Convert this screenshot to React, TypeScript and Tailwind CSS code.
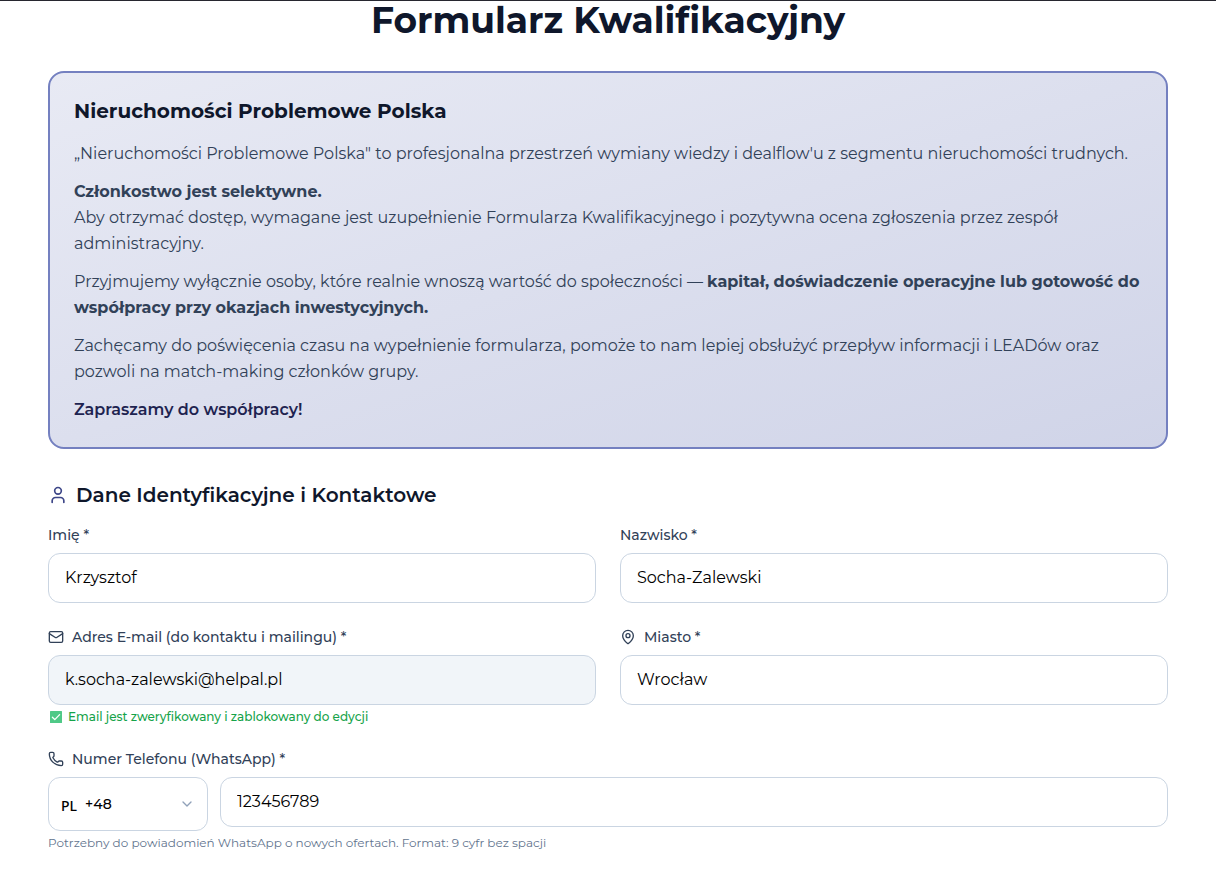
import { useState } from "react";
import type { ReactNode } from "react";
import { ChevronDown, Mail, MapPin, Phone, User } from "lucide-react";

const inputClass =
	"w-full h-[50px] rounded-xl border border-slate-300 px-4 pb-0.5 text-base leading-6 text-black outline-none focus:border-indigo-400";

type FieldProps = {
	id: string;
	label: string;
	icon?: ReactNode;
	children: ReactNode;
};

function Field({ id, label, icon, children }: FieldProps) {
	return (
		<div>
			<label htmlFor={id} className="mb-2 flex items-center gap-2 text-sm leading-5 font-medium text-slate-700">
				{icon}
				{label}
			</label>
			{children}
		</div>
	);
}

function VerifiedMark() {
	return (
		<svg viewBox="0 0 12 12" className="size-3 shrink-0" aria-hidden="true">
			<rect width="12" height="12" rx="0.5" fill="#4fc987" />
			<path d="M2.4 6.2 4.8 8.6 9.6 3.6" fill="none" stroke="#fff" strokeWidth="1.3" strokeLinecap="round" strokeLinejoin="round" />
		</svg>
	);
}

export default function App() {
	const [form, setForm] = useState({
		firstName: "Krzysztof",
		lastName: "Socha-Zalewski",
		city: "Wrocław",
		prefix: "+48",
		phone: "123456789",
	});

	const update = (key: keyof typeof form, value: string) => setForm({ ...form, [key]: value });

	return (
		<main className="border-t border-[#27272f] bg-white px-12 pb-5 font-['Montserrat','Inter',sans-serif]">
			<h1 className="text-center text-4xl leading-[38px] font-bold text-slate-900">Formularz Kwalifikacyjny</h1>

			{/* Intro */}
			<section className="mt-8 rounded-2xl border-2 border-[#7480c0] bg-linear-to-br from-[#e8eaf4] to-[#d0d4e8] p-6">
				<h2 className="mb-4 text-xl leading-7 font-bold text-slate-900">Nieruchomości Problemowe Polska</h2>
				<div className="space-y-3 text-base leading-[26px] text-slate-700">
					<p>
						„Nieruchomości Problemowe Polska" to profesjonalna przestrzeń wymiany wiedzy i dealflow'u z segmentu nieruchomości trudnych.
					</p>
					<p>
						<strong>Członkostwo jest selektywne.</strong>
						<br />
						Aby otrzymać dostęp, wymagane jest uzupełnienie Formularza Kwalifikacyjnego i pozytywna ocena zgłoszenia przez zespół administracyjny.
					</p>
					<p>
						Przyjmujemy wyłącznie osoby, które realnie wnoszą wartość do społeczności —{" "}
						<strong>kapitał, doświadczenie operacyjne lub gotowość do współpracy przy okazjach inwestycyjnych.</strong>
					</p>
					<p>
						Zachęcamy do poświęcenia czasu na wypełnienie formularza, pomoże to nam lepiej obsłużyć przepływ informacji i LEADów oraz pozwoli na match-making członków grupy.
					</p>
					<p className="font-semibold text-[#1e2350]">Zapraszamy do współpracy!</p>
				</div>
			</section>

			{/* Contact data */}
			<form className="mt-8" onSubmit={(e) => e.preventDefault()}>
				<h2 className="mb-4 flex items-center gap-2 text-xl leading-7 font-semibold text-slate-900">
					<User className="size-5 text-[#3d4688]" />
					Dane Identyfikacyjne i Kontaktowe
				</h2>

				<div className="grid grid-cols-2 gap-6">
					<Field id="firstName" label="Imię *">
						<input id="firstName" className={inputClass} value={form.firstName} onChange={(e) => update("firstName", e.target.value)} />
					</Field>
					<Field id="lastName" label="Nazwisko *">
						<input id="lastName" className={inputClass} value={form.lastName} onChange={(e) => update("lastName", e.target.value)} />
					</Field>
					<Field id="email" label="Adres E-mail (do kontaktu i mailingu) *" icon={<Mail className="size-4" />}>
						<input id="email" type="email" readOnly className={`${inputClass} bg-slate-100`} value="k.socha-zalewski@helpal.pl" />
						<p className="mt-1 flex items-center gap-1.5 pl-0.5 text-xs leading-4 font-medium text-[#16a34a]">
							<VerifiedMark />
							Email jest zweryfikowany i zablokowany do edycji
						</p>
					</Field>
					<Field id="city" label="Miasto *" icon={<MapPin className="size-4" />}>
						<input id="city" className={inputClass} value={form.city} onChange={(e) => update("city", e.target.value)} />
					</Field>
				</div>

				<div className="mt-6">
					<Field id="phone" label="Numer Telefonu (WhatsApp) *" icon={<Phone className="size-4" />}>
						<div className="flex items-start gap-3">
							<div className="relative flex h-[54px] w-40 shrink-0 items-center gap-2 rounded-xl border border-slate-300 px-3 text-sm font-medium text-black">
								<span className="pt-1 font-['Noto_Sans',sans-serif]">PL</span>
								<select
									aria-label="Kierunkowy"
									className="h-full flex-1 appearance-none outline-none"
									value={form.prefix}
									onChange={(e) => update("prefix", e.target.value)}
								>
									<option value="+48">+48</option>
								</select>
								<ChevronDown className="pointer-events-none absolute inset-y-0 right-3 my-auto size-4 text-slate-400" />
							</div>
							<input id="phone" type="tel" className={inputClass} value={form.phone} onChange={(e) => update("phone", e.target.value)} />
						</div>
						<p className="mt-1 text-xs leading-4 text-slate-500">
							Potrzebny do powiadomień WhatsApp o nowych ofertach. Format: 9 cyfr bez spacji
						</p>
					</Field>
				</div>
			</form>
		</main>
	);
}
